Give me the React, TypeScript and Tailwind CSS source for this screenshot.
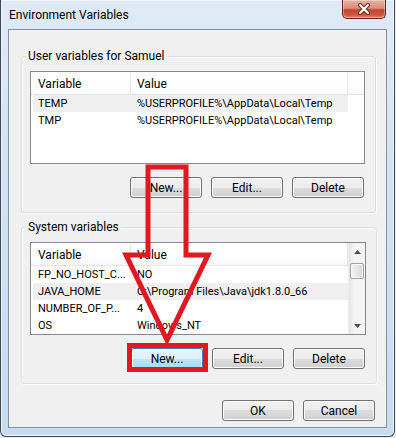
import clsx from 'clsx'

type Row = [string, string]

const USER_ROWS: Row[] = [
  ['TEMP', '%USERPROFILE%\\AppData\\Local\\Temp'],
  ['TMP', '%USERPROFILE%\\AppData\\Local\\Temp'],
]

const SYS_ROWS: Row[] = [
  ['FP_NO_HOST_C...', 'NO'],
  ['JAVA_HOME', 'C:\\Program Files\\Java\\jdk1.8.0_66'],
  ['NUMBER_OF_P...', '4'],
  ['OS', 'Windows_NT'],
]

function Btn({ children, focus }: { children: React.ReactNode; focus?: boolean }) {
  return (
    <button
      className={clsx(
        'w-[72px] h-[21px] rounded-[3px] border text-[12px] leading-none text-black shadow-[inset_0_0_0_1px_#fcfcfc]',
        focus
          ? 'border-[#3c7fb1] bg-[linear-gradient(to_bottom,#eaf6fd_0%,#d9f0fc_50%,#bee6fd_50%,#a7d9f5_100%)]'
          : 'border-[#707070] bg-[linear-gradient(to_bottom,#f2f2f2_0%,#ebebeb_50%,#dddddd_50%,#cfcfcf_100%)]'
      )}
    >
      {children}
    </button>
  )
}

function Arrow({ up }: { up?: boolean }) {
  return (
    <svg width="7" height="4" viewBox="0 0 7 4" className="text-[#4d4d4d]">
      <path d={up ? 'M0 4 L3.5 0 L7 4 Z' : 'M0 0 L3.5 4 L7 0 Z'} fill="currentColor" />
    </svg>
  )
}

function ScrollBar() {
  return (
    <div className="w-[17px] flex flex-col bg-[linear-gradient(to_right,#e5e5e5,#f4f4f4_30%,#f4f4f4)] border-l border-[#ececec]">
      <div className="h-[17px] flex items-center justify-center">
        <Arrow up />
      </div>
      <div className="h-[3px]" />
      <div className="h-[16px] mx-[1px] rounded-[2px] border border-[#a0a0a0] bg-[linear-gradient(to_right,#f3f3f3,#e6e6e6_50%,#d8d8d8)] shadow-[inset_0_0_0_1px_#fbfbfb]" />
      <div className="flex-1" />
      <div className="h-[17px] flex items-center justify-center">
        <Arrow />
      </div>
    </div>
  )
}

function ListView({ rows, hi, scroll }: { rows: Row[]; hi: number; scroll?: boolean }) {
  return (
    <div className="h-[93px] border border-[#828790] bg-white flex">
      <div className="flex-1 flex flex-col min-w-0">
        <div className="h-[23px] flex border-b border-[#e5e5e5] bg-[linear-gradient(to_bottom,#ffffff,#ffffff_60%,#f6f7f8)]">
          <div className="w-[100px] shrink-0 pl-[7px] pt-[1px] border-r border-[#e3e8ee] flex items-center">Variable</div>
          <div className="w-[217px] shrink-0 pl-[6px] pt-[1px] border-r border-[#e3e8ee] flex items-center">Value</div>
        </div>
        {rows.map((r, i) => (
          <div
            key={r[0]}
            className={clsx(
              'h-[17px] w-[315px] ml-[2px] flex items-center pt-[1px] text-[11px]',
              i === hi && 'bg-[#efefef]'
            )}
          >
            <div className="w-[98px] shrink-0 pl-[5px] whitespace-nowrap">{r[0]}</div>
            <div className="pl-[6px] whitespace-nowrap">{r[1]}</div>
          </div>
        ))}
      </div>
      {scroll && <ScrollBar />}
    </div>
  )
}

function Group({ title, rows, hi, scroll, newFocus }: { title: string; rows: Row[]; hi: number; scroll?: boolean; newFocus?: boolean }) {
  return (
    <fieldset className="border border-[#d5dfe5] rounded-[3px] pl-[8px] pr-[10px] pt-[7px] pb-[14px] shadow-[inset_1px_1px_0_#ffffff,1px_1px_0_#ffffff]">
      <legend className="-ml-[4px] px-[2px] leading-[15px]">{title}</legend>
      <ListView rows={rows} hi={hi} scroll={scroll} />
      <div className="flex justify-end gap-[9px] mt-[13px] pr-[1px]">
        <Btn focus={newFocus}>New...</Btn>
        <Btn>Edit...</Btn>
        <Btn>Delete</Btn>
      </div>
    </fieldset>
  )
}

export default function App() {
  return (
    <div className="w-[396px] h-[438px] bg-[#e9eef4] relative overflow-hidden font-['Roboto',sans-serif] text-[12px] text-black">
      <div className="w-[395px] h-[437px] flex flex-col border-x border-b border-[#3b4857] rounded-b-[6px] bg-[linear-gradient(to_bottom,#dfeaf6,#d3e2f2_40%,#c7dbef)] shadow-[inset_0_0_0_1px_#eef4fb]">
        {/* title bar */}
        <div className="h-[29px] flex items-start">
          <span className="self-center pl-[8px] pt-[1px] text-[12px]">Environment Variables</span>
          <div className="ml-auto mr-[8px] w-[44px] h-[19px] rounded-b-[5px] border border-t-0 border-[#5e241a] bg-[linear-gradient(to_bottom,#e8b1a4_0%,#dc8f7c_45%,#c2442c_55%,#cf5b40_85%,#e08a6e_100%)] shadow-[inset_0_0_0_1px_rgba(255,255,255,0.35)] flex items-center justify-center">
            <svg width="14" height="12" viewBox="0 0 14 12">
              <path d="M3 2 L11 10 M11 2 L3 10" stroke="#6b2417" strokeWidth="4" strokeLinecap="round" />
              <path d="M3 2 L11 10 M11 2 L3 10" stroke="#ffffff" strokeWidth="2.2" strokeLinecap="round" />
            </svg>
          </div>
        </div>
        {/* client area */}
        <div className="flex-1 mx-[7px] mb-[8px] border border-[#8292a5] bg-[#f0f0f0] pt-[19px] pl-[12px] pr-[10px] flex flex-col">
          <Group title="User variables for Samuel" rows={USER_ROWS} hi={0} />
          <div className="h-[7px]" />
          <Group title="System variables" rows={SYS_ROWS} hi={1} scroll newFocus />
          <div className="flex justify-end gap-[9px] mt-[16px] pr-[1px]">
            <Btn>OK</Btn>
            <Btn>Cancel</Btn>
          </div>
        </div>
      </div>
      {/* red annotation overlay */}
      <svg className="absolute inset-0 pointer-events-none" width="396" height="438" viewBox="0 0 396 438">
        <polygon
          points="148,167 186,167 186,255 208,255 167,340 126,255 148,255"
          fill="none"
          stroke="#e3171f"
          strokeWidth="5"
          strokeLinejoin="miter"
        />
        <rect x="129.5" y="345.5" width="76" height="24" fill="none" stroke="#e3171f" strokeWidth="5" />
      </svg>
    </div>
  )
}
